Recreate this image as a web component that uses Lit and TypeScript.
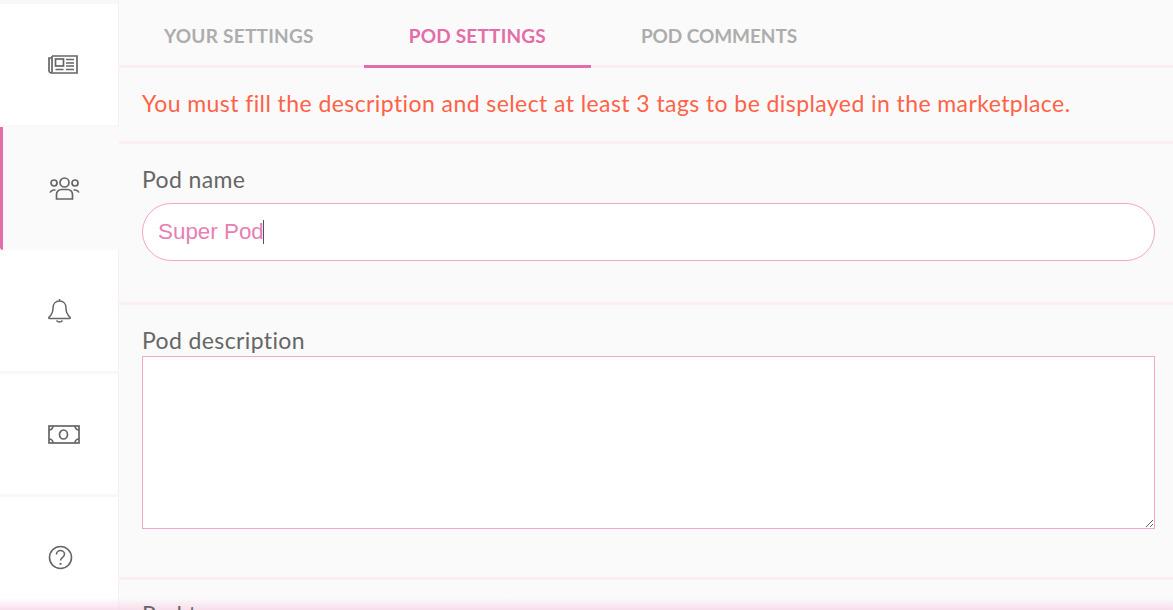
import { LitElement, html, css, svg } from "lit";
import { customElement } from "lit/decorators.js";

const icons = {
  news: svg`<svg class="ic i-news" width="30" height="19" viewBox="0 0 30 19" fill="none" stroke="#666" stroke-width="1.7">
    <path d="M4 1h25v17H3.500A2.500 2.500 0 0 1 1 15.500V3h3"/><path d="M4 1v14.500A2.500 2.500 0 0 1 3.500 18"/>
    <rect x="7.500" y="4" width="8" height="7"/><path d="M7.500 14.500h8M18 4.500h8M18 8h8M18 11h8M18 14.500h8"/></svg>`,
  people: svg`<svg class="ic i-people" width="31" height="23" viewBox="0 0 31 23" fill="none" stroke="#666" stroke-width="1.700">
    <circle cx="15.500" cy="5.500" r="4.500"/><circle cx="5" cy="6" r="3"/><circle cx="26" cy="6" r="3"/>
    <path d="M7.500 22v-4.500a5 5 0 0 1 5-5h6a5 5 0 0 1 5 5V22z"/><path d="M1 15.500a4.500 4.500 0 0 1 3.500-2.500h2M30 15.500a4.500 4.500 0 0 0-3.500-2.500h-2"/></svg>`,
  bell: svg`<svg class="ic i-bell" width="23" height="25" viewBox="0 0 23 25" fill="none" stroke="#666" stroke-width="1.500">
    <path d="M11.500 1v2M11.500 3c-4 0-6.500 3-6.500 7 0 5-1.500 7-4 9.300-.5.500-.2 1.200.4 1.200h20.200c.6 0 .9-.7.4-1.200C19.500 17 18 15 18 10c0-4-2.500-7-6.500-7z"/>
    <path d="M8.500 22.500c.7 1 1.800 1.500 3 1.500s2.300-.5 3-1.500"/></svg>`,
  money: svg`<svg class="ic i-money" width="32" height="19" viewBox="0 0 32 19" fill="none" stroke="#666" stroke-width="1.700">
    <rect x="1" y="1" width="30" height="17"/><ellipse cx="15.500" cy="9.500" rx="4" ry="4.500"/>
    <path d="M1 5a4 4 0 0 0 4-4M27 1a4 4 0 0 0 4 4M31 14a4 4 0 0 0-4 4M5 18a4 4 0 0 0-4-4"/></svg>`,
  help: svg`<svg class="ic i-help" width="25" height="25" viewBox="0 0 25 25" fill="none" stroke="#666" stroke-width="1.600">
    <circle cx="12.500" cy="12.500" r="11"/><path d="M8.500 9.500c0-2.500 2-4 4-4s4 1.500 4 3.800c0 3-4 3-4 6.200"/><path d="M12.500 18v1.800" stroke-width="2"/></svg>`,
};

@customElement("app-root")
export class AppRoot extends LitElement {
  static styles = css`
    :host { display: block; height: 610px; overflow: hidden; position: relative; background: #fafafa;
      font-family: "Lato", "Liberation Sans", sans-serif; color: #666; }
    .page { display: flex; height: 610px; overflow: hidden; }
    .side { width: 118px; flex: none; border-right: 1px solid #fbeff6; background: #f8f8f8; display: flex; flex-direction: column; padding-top: 4px; gap: 2px; }
    .item { height: 121px; flex: none; background: #fff; display: flex; align-items: center; justify-content: center; }
    .item.active { height: 123px; background: #fafafa; border-left: 3px solid #e36da8; border-radius: 0 0 0 3px; box-sizing: border-box; margin-right: -1px; padding-right: 2px; }
    .item.n3 { margin-top: -2px; height: 121px; }
    .item.n4 { margin-top: 1px; height: 120px; }
    .item.n5 { margin-top: 1px; height: 120px; }
    .ic { display: block; }
    .i-news { margin-left: 7px; }
    .i-people { margin-left: 9px; }
    .i-bell { margin-left: 1px; }
    .i-money { margin-left: 9px; }
    .i-help { margin-left: 2px; }
    .main { flex: 1; min-width: 0; }
    .tabs { display: flex; gap: 5px; height: 65px; border-bottom: 3px solid #fbeef5; }
    .tab { padding: 0 45px; font-size: 19px; font-weight: 700; letter-spacing: 0.25px; color: #adadad; line-height: 71px; height: 68px; box-sizing: border-box; white-space: nowrap; }
    .tab.on { color: #e36da8; border-bottom: 3px solid #e36da8; letter-spacing: 0.2px; }
    .tab.last { letter-spacing: -0.08px; }
    .msg { height: 76px; box-sizing: border-box; border-bottom: 3px solid #fbeef5; padding: 0 0 0 23px; color: #ff6247; font-size: 23px; line-height: 70px; white-space: nowrap; letter-spacing: 0.42px; }
    .sec { box-sizing: border-box; border-bottom: 3px solid #fbeef5; padding: 0 18px 0 23px; }
    .s1 { height: 161px; padding-top: 21px; }
    .s2 { height: 275px; padding-top: 21px; }
    .s3 { padding-top: 20px; }
    label { display: block; font-size: 23px; line-height: 28px; color: #666; letter-spacing: 0.38px; position: relative; z-index: 2; }
    .input { margin-top: 10px; height: 58px; box-sizing: border-box; border: 1px solid #f0a6cd; border-radius: 29px; background: #fff; display: flex; align-items: center; padding-left: 15px; font: 22.400px "Liberation Sans", Arial, sans-serif; color: #e680b4; }
    .caret { width: 1px; height: 24px; background: #555; margin-left: -1px; }
    textarea { display: block; width: 100%; height: 173px; box-sizing: border-box; border: 1px solid #f0a6cd; margin: 0; padding: 0; background: #fff; border-radius: 0; outline: none; }
    .s2 label { margin-bottom: 2px; }
    .fade { position: absolute; left: 0; right: 0; bottom: 0; height: 12px; pointer-events: none; z-index: 1; background: linear-gradient(to bottom, rgba(247,215,232,0), rgba(247,215,232,.8)); }
  `;

  render() {
    return html`
      <div class="page">
        <nav class="side">
          <div class="item">${icons.news}</div>
          <div class="item active">${icons.people}</div>
          <div class="item n3">${icons.bell}</div>
          <div class="item n4">${icons.money}</div>
          <div class="item n5">${icons.help}</div>
        </nav>
        <main class="main">
          <div class="tabs">
            <div class="tab">YOUR SETTINGS</div>
            <div class="tab on">POD SETTINGS</div>
            <div class="tab last">POD COMMENTS</div>
          </div>
          <div class="msg">You must fill the description and select at least 3 tags to be displayed in the marketplace.</div>
          <section class="sec s1">
            <label>Pod name</label>
            <div class="input">Super Pod<span class="caret"></span></div>
          </section>
          <section class="sec s2">
            <label>Pod description</label>
            <textarea></textarea>
          </section>
          <section class="s3 sec"><label>Pod tags</label></section>
        </main>
      </div>
      <div class="fade"></div>
    `;
  }
}
